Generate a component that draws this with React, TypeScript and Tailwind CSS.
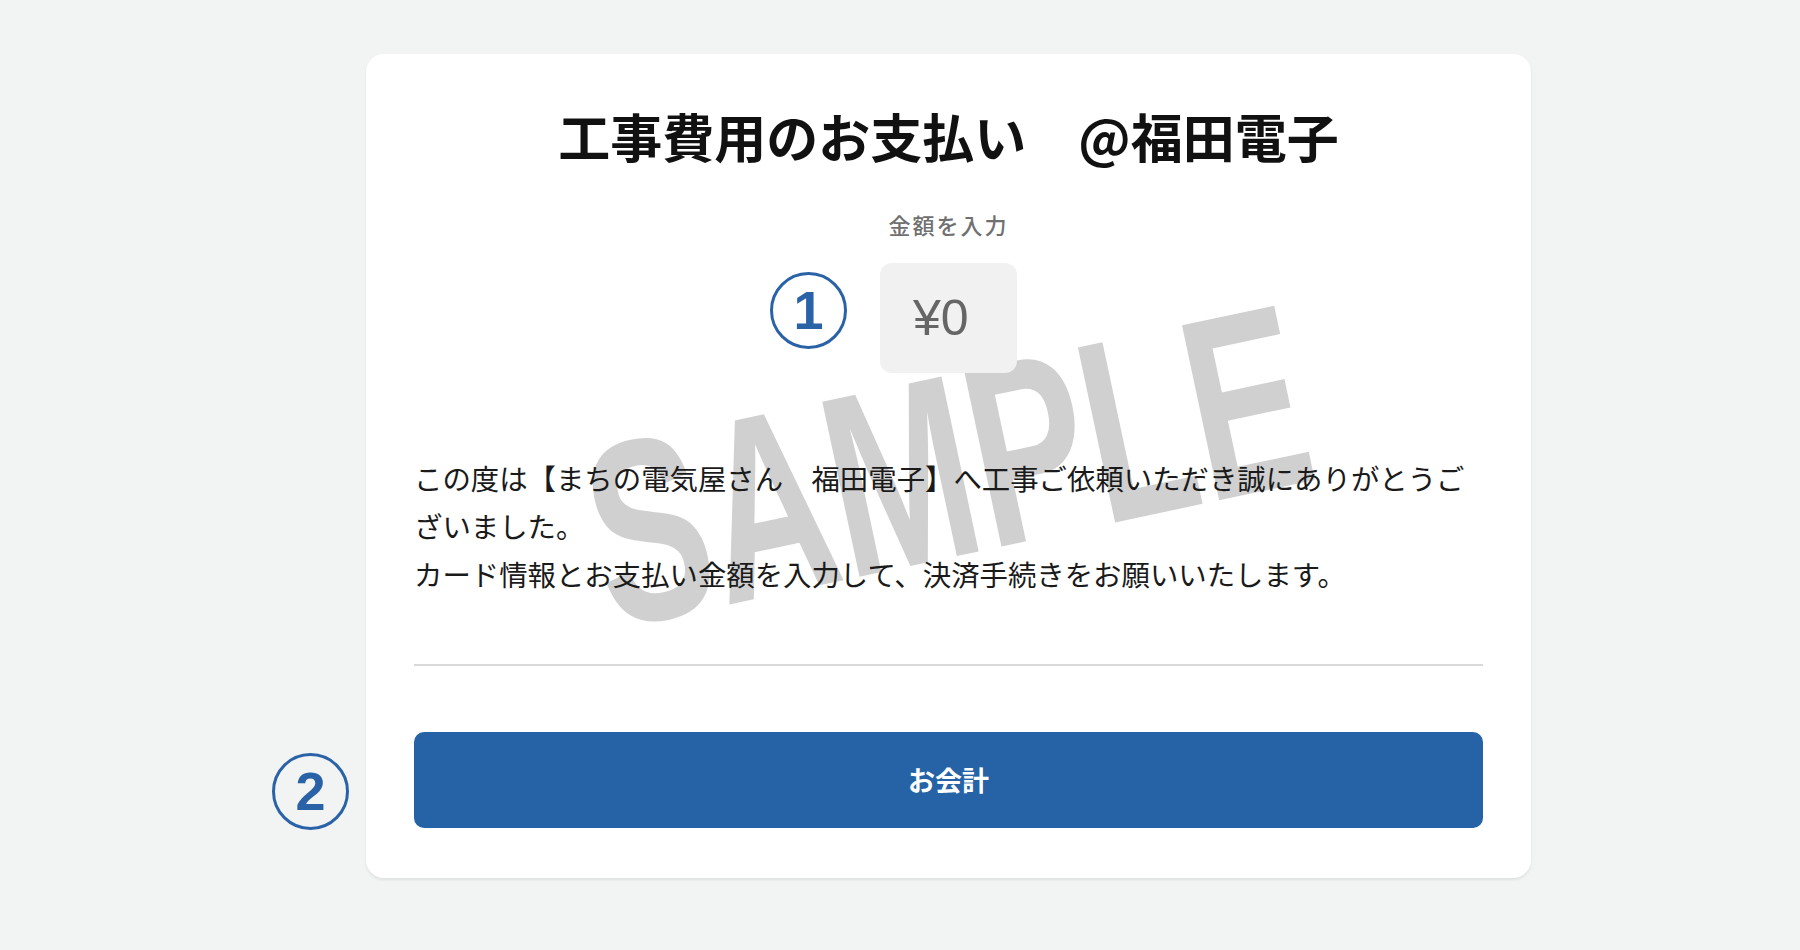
import React from 'react';

const jp = "font-['Noto_Sans_CJK_JP',sans-serif]";

const CircleNum: React.FC<{ n: string; className?: string }> = ({ n, className }) => (
    <div
        className={`absolute w-[77px] h-[77px] rounded-full border-[3px] border-[#2a62a8] flex items-center justify-center text-[#2a62a8] font-bold text-[54px] leading-none font-['Liberation_Sans',sans-serif] ${className ?? ''}`}
    >
        <span className="-mt-[2px]">{n}</span>
    </div>
);

const App: React.FC = () => {
    return (
        <div className={`min-h-[950px] bg-[#f2f3f3] pt-[54px] ${jp}`}>
            <div className="relative ml-[366px] w-[1165px] bg-white rounded-[18px] shadow-[0_2px_3px_rgba(0,0,0,0.08)] px-[48px] pt-[43px] pb-[50px]">
                {/* watermark */}
                <div className="absolute inset-0 overflow-hidden rounded-[18px] pointer-events-none select-none">
                    <div className="absolute left-[582px] top-[412px] w-0 h-0 flex items-center justify-center">
                        <div className="[transform:rotate(-12deg)_scaleX(0.67)] text-[260px] leading-none font-bold text-[#d0d0d0] font-['Liberation_Sans',sans-serif] whitespace-nowrap">
                            SAMPLE
                        </div>
                    </div>
                </div>

                <div className="relative flex flex-col items-center">
                    <h1 className="text-[52px] leading-[78px] font-bold text-[#111] text-center">
                        工事費用のお支払い　@福田電子
                    </h1>

                    <p className="mt-[34px] text-[22px] leading-[30px] tracking-[2px] font-medium text-[#707070]">
                        金額を入力
                    </p>

                    <div className="relative mt-[24px] w-[137px] h-[110px] rounded-[12px] bg-[#f1f1f1] flex items-center pl-[33px]">
                        <CircleNum n="1" className="right-[calc(100%+33px)] top-[9px]" />
                        <span className="text-[50px] leading-none text-[#666] font-['Liberation_Sans',sans-serif]">¥0</span>
                    </div>

                    <div className="self-stretch mt-[81px] text-[28.4px] leading-[48px] text-[#1a1a1a]">
                        <p>この度は【まちの電気屋さん　福田電子】へ工事ご依頼いただき誠にありがとうございました。</p>
                        <p>カード情報とお支払い金額を入力して、決済手続きをお願いいたします。</p>
                    </div>

                    <div className="self-stretch mt-[66px] h-[2px] bg-[#d9d9d9]" />

                    <div className="relative self-stretch mt-[66px]">
                        <CircleNum n="2" className="right-[calc(100%+65px)] top-[21px]" />
                        <button className="w-full h-[96px] rounded-[10px] bg-[#2563a6] text-white text-[27px] font-bold">
                            お会計
                        </button>
                    </div>
                </div>
            </div>
        </div>
    );
};

export default App;
